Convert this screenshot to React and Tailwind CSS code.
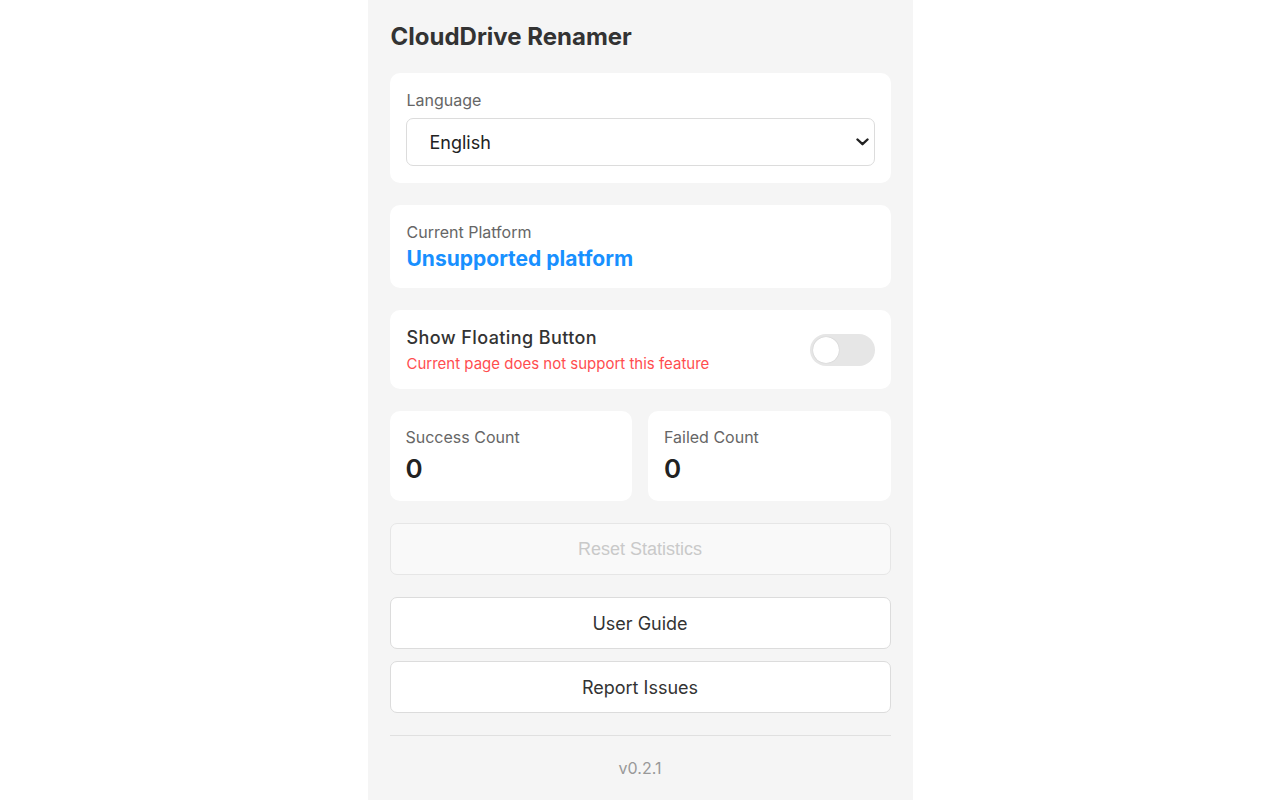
import { useState } from "react";

const font = { fontFamily: "Inter, 'Noto Sans', sans-serif" };

function Card({ children, className = "" }) {
  return (
    <div className={`bg-white rounded-[10px] px-4 ${className}`}>
      {children}
    </div>
  );
}

function StatCard({ label, value }) {
  return (
    <Card className="pt-[14px] pb-[15px]">
      <div className="text-[16px] leading-[24px] text-[#666]">
        {label}
      </div>
      <div className="mt-[3px] text-[26px] leading-[34px] font-semibold text-[#222]">
        {value}
      </div>
    </Card>
  );
}

function App() {
  const [lang, setLang] = useState("en");
  const [floating, setFloating] = useState(false);

  return (
    <div className="min-h-screen w-full bg-white" style={font}>
      <div className="mx-auto w-[545px] min-h-screen bg-[#f5f5f5] px-[22px] pt-[22px] pb-6">

        {/* Header */}
        <h1 className="text-[24px] leading-[30px] font-bold text-[#333] mb-[21px] pl-px">
          CloudDrive Renamer
        </h1>

        <div className="flex flex-col gap-[22px]">

          {/* Language */}
          <Card className="pt-4 pb-[17px]">
            <label className="block text-[16px] leading-[22px] text-[#666] mb-[7px] pl-px">
              Language
            </label>
            <div className="relative">
              <select
                value={lang}
                onChange={(e) => setLang(e.target.value)}
                className="w-full h-[48px] appearance-none bg-white border border-[#dcdcdc] rounded-[7px] pl-[23px] pr-10 text-[18px] text-[#222] outline-none"
                style={font}
              >
                <option value="en">English</option>
                <option value="zh">中文</option>
              </select>
              <svg
                className="absolute right-[6px] top-1/2 -translate-y-1/2 pointer-events-none"
                width="13"
                height="8"
                viewBox="0 0 13 8"
                fill="none"
              >
                <path
                  d="M1.5 1.5L6.5 6.2L11.5 1.5"
                  stroke="#222"
                  strokeWidth="2.4"
                  strokeLinecap="round"
                  strokeLinejoin="round"
                />
              </svg>
            </div>
          </Card>

          {/* Platform */}
          <Card className="pt-4 pb-[15px]">
            <div className="text-[16px] leading-[22px] text-[#666] pl-px">
              Current Platform
            </div>
            <div className="mt-[2px] text-[21px] leading-[28px] font-bold text-[#1890ff] pl-px">
              Unsupported platform
            </div>
          </Card>

          {/* Floating button */}
          <Card className="py-[15px] flex items-center justify-between">
            <div className="pl-px">
              <div className="text-[18px] leading-[26px] font-medium tracking-[0.4px] text-[#333]">
                Show Floating Button
              </div>
              <div className="mt-[3px] text-[15px] leading-[20px] text-[#ff4d4f]">
                Current page does not support this feature
              </div>
            </div>
            <button
              onClick={() => setFloating(!floating)}
              className={`relative w-[65px] h-[32px] rounded-full shrink-0 ${
                floating ? "bg-[#1890ff]" : "bg-[#e6e6e6]"
              }`}
            >
              <span
                className={`absolute top-[3px] w-[26px] h-[26px] rounded-full bg-white shadow-[0_0_1px_rgba(0,0,0,0.25)] ${
                  floating ? "left-[36px]" : "left-[3px]"
                }`}
              />
            </button>
          </Card>

          {/* Stats */}
          <div className="grid grid-cols-2 gap-4">
            <StatCard label="Success Count" value={0} />
            <StatCard label="Failed Count" value={0} />
          </div>

          {/* Actions */}
          <button
            disabled
            className="w-full h-[52px] rounded-[7px] border border-[#e6e6e6] bg-[#f9f9f9] text-[18px] text-[#c9c9c9]"
            style={{ fontFamily: "'Liberation Sans', Arial, sans-serif" }}
          >
            Reset Statistics
          </button>

          <div className="flex flex-col gap-3">
            <button className="w-full h-[52px] rounded-[7px] border border-[#dcdcdc] bg-white text-[18px] text-[#333]">
              User Guide
            </button>
            <button className="w-full h-[52px] rounded-[7px] border border-[#dcdcdc] bg-white text-[18px] text-[#333]">
              Report Issues
            </button>
          </div>
        </div>

        {/* Footer */}
        <div className="mt-[22px] border-t border-[#e0e0e0] pt-[20px] text-center text-[16px] leading-[24px] text-[#999]">
          v0.2.1
        </div>
      </div>
    </div>
  );
}

export default App;
